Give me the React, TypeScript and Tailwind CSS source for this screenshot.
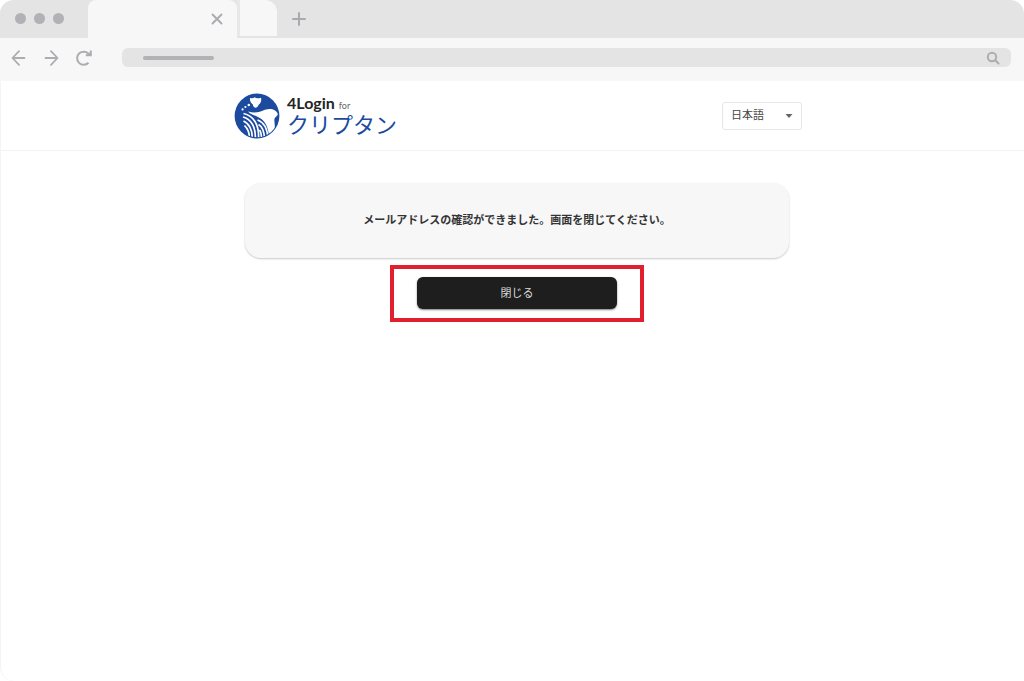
import { useState } from 'react';

const bahasaTersedia = ['日本語', 'English'];

function BarisTab() {
  return (
    <div className="flex h-[38px] bg-[#e4e4e4]">
      {/* Window buttons */}
      <div className="flex w-[88px] items-center gap-2 pl-[15px] pb-0.5">
        <span className="size-[11px] rounded-full bg-[#b1b1b6]" />
        <span className="size-[11px] rounded-full bg-[#b1b1b6]" />
        <span className="size-[11px] rounded-full bg-[#b1b1b6]" />
      </div>

      {/* Tabs */}
      <div className="flex w-[149px] items-center justify-end rounded-t-lg bg-[#f7f7f7] pr-[14px]">
        <button type="button" aria-label="タブを閉じる" className="text-[#a9a9ae]">
          <svg viewBox="0 0 12 12" className="size-3" fill="none" stroke="currentColor" strokeWidth="1.8" strokeLinecap="round">
            <path d="M1.5 1.5 10.5 10.5M10.5 1.5 1.5 10.5" />
          </svg>
        </button>
      </div>
      <div className="h-9 w-10 rounded-tr-xl border-l-3 border-[#e8e8eb] bg-[#f7f7f7]" />
      <button type="button" aria-label="新しいタブ" className="ml-[15px] text-[#a9a9ae]">
        <svg viewBox="0 0 14 14" className="size-[14px]" fill="none" stroke="currentColor" strokeWidth="2" strokeLinecap="round">
          <path d="M7 1V13M1 7H13" />
        </svg>
      </button>
    </div>
  );
}

function BarisAlamat() {
  return (
    <div className="flex h-[43px] items-center bg-[#f7f7f7] pr-[13px] pb-1 pl-[11px] text-[#acacb1]">
      <button type="button" aria-label="戻る">
        <svg viewBox="0 0 16 16" className="size-4" fill="none" stroke="currentColor" strokeWidth="1.8" strokeLinecap="round" strokeLinejoin="round">
          <path d="M13.5 8H1.8M8 1.2 1.5 8 8 14.8" />
        </svg>
      </button>
      <button type="button" aria-label="進む" className="ml-4">
        <svg viewBox="0 0 16 16" className="size-4" fill="none" stroke="currentColor" strokeWidth="1.8" strokeLinecap="round" strokeLinejoin="round">
          <path d="M2.5 8H14.2M8 1.2 14.5 8 8 14.8" />
        </svg>
      </button>
      <button type="button" aria-label="再読み込み" className="ml-4">
        <svg viewBox="0 0 18 18" className="size-[18px]" fill="none" stroke="currentColor" strokeWidth="2">
          <path d="M13.5 13.8A6.6 6.6 0 1 1 13.8 5" />
          <path d="M15.8 1.5V6.3H10.8" />
          <path d="M15.8 2.5V6.3H12Z" fill="currentColor" stroke="none" />
        </svg>
      </button>

      <div className="ml-[29px] flex h-[19px] flex-1 items-center rounded-md bg-[#e4e4e4] pr-[11px] pl-[21px]">
        <span className="h-1 w-[71px] rounded-full bg-[#b1b1b6]" />
        <input type="text" aria-label="アドレス" className="h-full min-w-0 flex-1 bg-transparent px-2 text-xs outline-none" />
        <button type="button" aria-label="検索">
          <svg viewBox="0 0 14 14" className="size-[14px]" fill="none" stroke="currentColor" strokeWidth="2" strokeLinecap="round">
            <circle cx="6" cy="6" r="4.2" />
            <path d="M9.5 9.5 12.5 12.5" />
          </svg>
        </button>
      </div>
    </div>
  );
}

function Logo() {
  return (
    <a href="#" className="flex items-center gap-[7px]">
      <svg viewBox="0 0 46 46" className="size-[46px]" aria-hidden="true">
        <defs>
          <clipPath id="lingkaran">
            <circle cx="23" cy="23" r="21.3" />
          </clipPath>
        </defs>
        <circle cx="23" cy="23" r="22.4" fill="#1b4a9f" />
        <g clipPath="url(#lingkaran)">
          {/* Bird */}
          <path d="M16 5C18 5.6 19.3 5.4 20.8 4.2C22.3 5.6 24 5.6 27 4.8C27.8 8 26.5 10.5 24.8 11.5C24.3 13.2 23 14.6 21.3 14.8C19.8 14.2 19 12.8 18.7 11.2C16.6 10 15.6 7.5 16 5Z" fill="#fff" />
          <circle cx="14.8" cy="12" r="1.3" fill="#fff" />
          <circle cx="11.4" cy="14" r="1.1" fill="#fff" />
          <circle cx="8.6" cy="16.4" r="1.1" fill="#fff" />
          {/* Wave body and crest */}
          <path d="M14 18.6C21 20.5 26 19 31 16.8C36 15 42 15.8 43.8 21C44 23 41.5 23.2 40.6 25.5C39.6 28.5 42 33 40 38L35 44C34.5 34 31 26.5 23 23.5C20 22.2 16.5 21.5 14 18.6Z" fill="#fff" />
          {/* Stripes falling to the right */}
          <g fill="none" stroke="#fff" strokeWidth="1.7">
            <path d="M24 23C31 25.5 37 34 37.5 43" />
            <path d="M23.5 27C29.5 29 33.3 36 34 45" />
            <path d="M24.5 31.5C28 33.5 30.3 39 30.5 46" />
            <path d="M25.5 37C27 39 27.5 42 27.5 46" />
          </g>
          {/* Stripes on the left */}
          <g fill="none" stroke="#fff" strokeWidth="1.7">
            <path d="M9.5 20.5C19.5 22.5 25.5 32 24.5 46" />
            <path d="M9 24C17 26 22 34 21.3 46" />
            <path d="M9.5 28C15 30.5 18.5 37 18.2 45" />
            <path d="M10.5 32.5C13.5 35.5 15.3 39.5 15.3 44" />
          </g>
        </g>
      </svg>
      <span className="flex flex-col pb-1">
        <span className="flex items-baseline gap-1 font-['Lato','Liberation_Sans',sans-serif] leading-5">
          <span className="text-base font-bold text-[#252525]">4Login</span>
          <span className="text-[9px] text-[#666]">for</span>
        </span>
        <span className="text-[22px] leading-5 text-[#1b4a9f]">クリプタン</span>
      </span>
    </a>
  );
}

function PilihanBahasa() {
  const [bahasa, setBahasa] = useState(bahasaTersedia[0]);

  return (
    <div className="relative">
      <select
        aria-label="言語"
        value={bahasa}
        onChange={(e) => setBahasa(e.target.value)}
        className="block h-7 w-20 appearance-none rounded-[3px] border border-[#e6e6e6] bg-white pl-2 text-[11px] text-[#444]"
      >
        {bahasaTersedia.map((nama) => (
          <option key={nama}>{nama}</option>
        ))}
      </select>
      <svg viewBox="0 0 8 4" className="pointer-events-none absolute top-3 right-[9px] h-1 w-2" fill="#666">
        <path d="M0.5 0H7.5L4 4Z" />
      </svg>
    </div>
  );
}

export default function App() {
  return (
    <div className="flex min-h-screen flex-col overflow-hidden rounded-[14px] bg-white font-['Liberation_Sans','Noto_Sans_CJK_JP',sans-serif] shadow-[inset_1px_0_0_#f4f4f4]">
      <BarisTab />
      <BarisAlamat />

      <header className="flex h-[70px] items-center justify-center border-b border-[#f2f2f2] pl-3">
        <div className="flex w-full max-w-[568px] items-center justify-between">
          <Logo />
          <PilihanBahasa />
        </div>
      </header>

      <main className="flex flex-1 flex-col items-center pt-8 pl-[10px]">
        <section className="flex h-[75px] w-full max-w-[544px] items-center justify-center rounded-2xl bg-[#f7f7f7] shadow-[0_1px_2px_rgba(0,0,0,0.22)]">
          <p className="text-[11px] font-bold text-[#333]">メールアドレスの確認ができました。画面を閉じてください。</p>
        </section>

        {/* Highlight frame around the close button */}
        <div className="mt-[7px] border-4 border-[#e0202e] px-[23px] pt-2 pb-[9px]">
          <button type="button" className="block h-8 w-[200px] rounded-md bg-[#1e1e1e] text-[11px] text-[#ddd] shadow-[0_1px_2px_rgba(0,0,0,0.5)]">
            閉じる
          </button>
        </div>
      </main>
    </div>
  );
}
